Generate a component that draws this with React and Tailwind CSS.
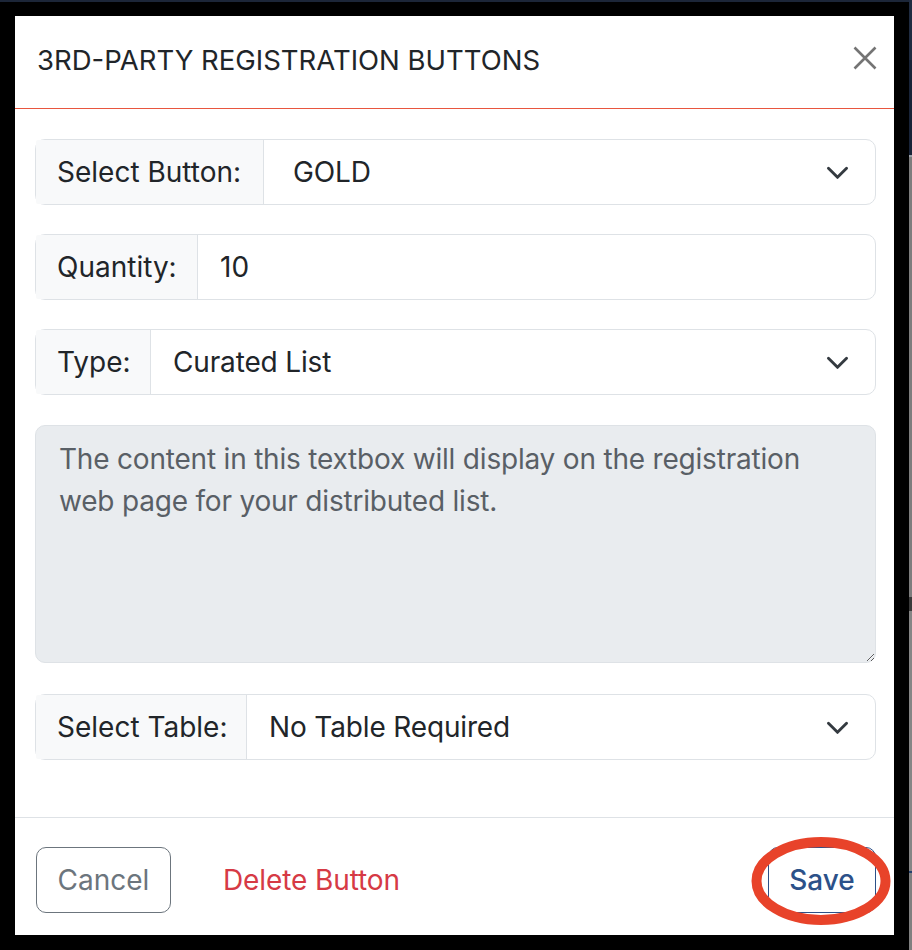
import { useState } from "react";

const font = "font-['Inter','Liberation_Sans',sans-serif]";

function Chevron() {
  return (
    <svg width="25" height="25" viewBox="0 0 16 16" fill="none" className="shrink-0">
      <path d="m2.2 5.3 5.8 5.8 5.8-5.8" stroke="#343a40" strokeWidth="1.85" strokeLinecap="round" strokeLinejoin="round" />
    </svg>
  );
}

function CloseIcon() {
  return (
    <svg width="24" height="24" viewBox="0 0 24 24" fill="none">
      <path d="M1.5 1.5 22.5 22.5M22.5 1.5 1.5 22.5" stroke="#747474" strokeWidth="2.6" />
    </svg>
  );
}

function Group({ label, labelWidth, children, className = "" }) {
  return (
    <div className={`flex h-[66px] w-full rounded-[10px] border border-[#dee2e6] ${className}`}>
      <div
        className={`flex items-center border-r border-[#dee2e6] bg-[#f8f9fa] pl-[21px] text-[28px] text-[#212529] rounded-l-[2px] ${labelWidth}`}
      >
        {label}
      </div>
      {children}
    </div>
  );
}

function SelectValue({ value, pad = "pl-[22px]" }) {
  return (
    <div className={`flex flex-1 items-center justify-between pr-[25px] text-[28px] tracking-[-0.15px] text-[#212529] ${pad}`}>
      <span>{value}</span>
      <Chevron />
    </div>
  );
}

export default function App() {
  const [qty, setQty] = useState("10");
  const note =
    "The content in this textbox will display on the registration web page for your distributed list.";

  return (
    <div className={`relative flex h-[950px] w-[912px] overflow-hidden bg-black ${font}`}>
      <div className="flex w-[909px] flex-col">
        <div className="h-[2px] bg-[#1c2638]" />
        <div className="pl-[15px] pt-[14px]">
          <div className="flex h-[919px] w-[879px] flex-col bg-white">
            {/* header */}
            <div className="flex h-[93px] items-start justify-between border-b border-[#e8563f] pl-[22px] pr-[17px] pt-[27px]">
              <h5 className="text-[27.5px] leading-[34px] text-[#212529]">
                3RD-PARTY REGISTRATION BUTTONS
              </h5>
              <button className="mt-[3px]">
                <CloseIcon />
              </button>
            </div>

            {/* body */}
            <div className="flex flex-1 flex-col pl-[20px] pr-[18px] pt-[30px]">
              <Group label="Select Button:" labelWidth="w-[228px]">
                <SelectValue value="GOLD" pad="pl-[29px]" />
              </Group>

              <Group label="Quantity:" labelWidth="w-[162px]" className="mt-[29px]">
                <input
                  value={qty}
                  onChange={(e) => setQty(e.target.value)}
                  className="min-w-0 flex-1 rounded-r-[10px] pl-[22px] text-[28px] text-[#212529] outline-none"
                />
              </Group>

              <Group label="Type:" labelWidth="w-[115px]" className="mt-[29px]">
                <SelectValue value="Curated List" />
              </Group>

              <textarea
                readOnly
                value={note}
                className="mt-[30px] h-[238px] w-full rounded-[10px] border border-[#dee2e6] bg-[#e9ecef] px-[23px] pt-[12px] text-[28px] leading-[42px] tracking-[-0.2px] text-[#595f66] outline-none"
              />

              <Group label="Select Table:" labelWidth="w-[211px]" className="mt-[31px]">
                <SelectValue value="No Table Required" />
              </Group>
            </div>

            {/* footer */}
            <div className="flex h-[118px] items-start border-t border-[#dee2e6] pl-[21px] pr-[18px] pt-[29px]">
              <button className="h-[66px] w-[135px] rounded-[10px] border border-[#6c757d] text-[28px] text-[#6c757d]">
                Cancel
              </button>
              <button className="ml-[30px] h-[66px] px-[22px] text-[28px] tracking-[-0.1px] text-[#d63a45]">
                Delete Button
              </button>
              <button className="ml-auto h-[66px] w-[108px] rounded-[10px] border border-[#2c5189] text-[28px] font-medium text-[#2c5189]">
                Save
              </button>
            </div>
          </div>
        </div>
      </div>

      {/* background page peeking through on the right */}
      <div className="flex w-[3px] flex-col">
        <div className="h-[60px] bg-[#1f2b40]" />
        <div className="h-[95px] bg-[#182338]" />
        <div className="h-[2px] bg-[#9aa0a8]" />
        <div className="h-[440px] bg-[#7d7d7d]" />
        <div className="h-[14px] bg-[#3a3a3a]" />
        <div className="h-[260px] bg-[#858585]" />
        <div className="h-[2px] bg-[#24406e]" />
        <div className="flex-1 bg-[#808080]" />
      </div>

      {/* annotation circle */}
      <svg
        className="pointer-events-none absolute left-[750px] top-[835px]"
        width="142"
        height="92"
        viewBox="0 0 142 92"
        fill="none"
      >
        <ellipse cx="71" cy="46" rx="64.5" ry="39" stroke="#e8432a" strokeWidth="10" />
      </svg>
    </div>
  );
}
